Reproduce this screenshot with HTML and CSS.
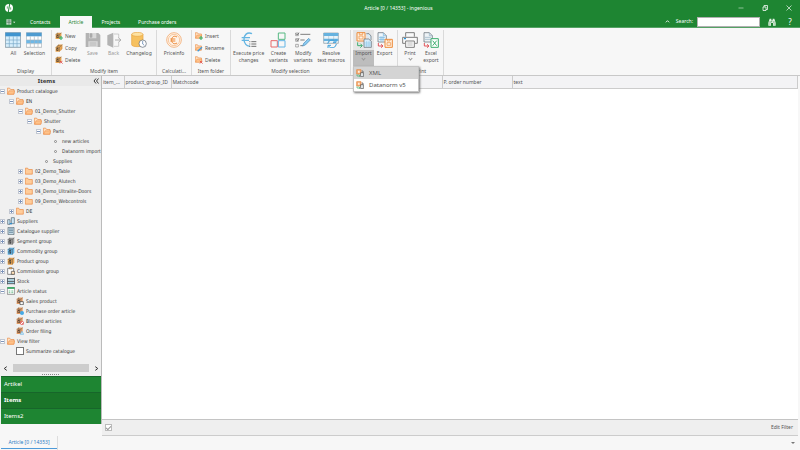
FILE: index.html
```html
<!DOCTYPE html>
<html lang="en">
<head>
<meta charset="utf-8">
<title>Article - ingenious</title>
<link rel="stylesheet" href="styles.css">
</head>
<body>
<svg class="defs" aria-hidden="true">
  <symbol id="folder" viewBox="0 0 24 21"><path d="M1 20V2h7l3 4h11v14z" fill="#ffcc99" stroke="#e9873e" stroke-width="2"/></symbol>
  <symbol id="folder-open" viewBox="0 0 24 21"><path d="M1 20V2h7l3 4h10v14z" fill="#ffe0c0" stroke="#e9873e" stroke-width="2"/><path d="M2 20l4-10h17l-3 10z" fill="#ffc28a" stroke="#e9873e" stroke-width="1.5"/></symbol>
  <symbol id="box" viewBox="0 0 24 24"><path d="M2 7l6-5h14v15l-6 6H2z" fill="currentColor"/><path d="M2 7h14v16M16 7l6-5M8 2v5" fill="none" stroke="#555" stroke-width="1.5"/><path d="M6 20v-8l5-2v8M6 12l5-2" stroke="#333" stroke-width="2" fill="none"/><circle cx="10" cy="18" r="2" fill="#333"/></symbol>
  <symbol id="plus" viewBox="0 0 10 10"><path d="M5 0v10M0 5h10" stroke="#3fb370" stroke-width="3"/></symbol>
  <symbol id="cross" viewBox="0 0 10 10"><path d="M1 1l8 8M9 1L1 9" stroke="#e04848" stroke-width="2.2"/></symbol>
  <symbol id="box-new" viewBox="0 0 24 24"><g color="#eba44f"><use href="#box" width="21" height="22"/></g><use href="#plus" x="12" y="12" width="12" height="12"/></symbol>
  <symbol id="box-copy" viewBox="0 0 24 24"><g color="#eba44f"><use href="#box" x="4" width="20" height="20"/><use href="#box" y="4" width="20" height="20"/></g></symbol>
  <symbol id="box-del" viewBox="0 0 24 24"><g color="#eba44f"><use href="#box" width="21" height="22"/></g><use href="#cross" x="13" y="13" width="11" height="11"/></symbol>
  <symbol id="table" viewBox="0 0 48 48"><path d="M1 2h46v44H1z" fill="#d7eefb" stroke="#6a7f8c" stroke-width="2"/><path d="M1 2h46v11H1z" fill="#3f94cf"/><path d="M2 24h44M2 35h44M13 13v32M25 13v32M36 13v32" stroke="#79a9c8" stroke-width="2"/></symbol>
  <symbol id="table-sel" viewBox="0 0 48 48"><path d="M1 2h46v44H1z" fill="#fff" stroke="#9aa5ac" stroke-width="2"/><path d="M1 2h46v11H1z" fill="#4e9bd0"/><path d="M1 24h46v10H1z" fill="#6cb8e8"/><path d="M2 24h44M2 35h44M13 13v32M25 13v32M36 13v32" stroke="#a7b5be" stroke-width="2"/></symbol>
  <symbol id="save" viewBox="0 0 48 48"><path d="M2 3h38l6 6v36H2z" fill="#b3b3b3"/><path d="M12 3h22v16H12zM10 28h28v17H10z" fill="#d9d9d9"/><path d="M15 5h6v11h-6zM14 33h20M14 39h20" stroke="#aaa" stroke-width="2" fill="#aaa"/></symbol>
  <symbol id="back" viewBox="0 0 48 48"><path d="M22 2L4 10v29l18 8z" fill="#b3b3b3"/><path d="M24 6h14v12M24 43h14V31" fill="none" stroke="#b9b9b9" stroke-width="2"/><path d="M27 24h16M37 17l8 7-8 7" fill="none" stroke="#b0b0b0" stroke-width="3"/></symbol>
  <symbol id="log" viewBox="0 0 48 48"><path d="M2 7v31c0 8 34 8 34 0V7" fill="#f6c160" stroke="#e8a33e" stroke-width="2"/><ellipse cx="19" cy="7" rx="17" ry="6" fill="#fde2a3" stroke="#e8a33e" stroke-width="2"/><circle cx="35" cy="35" r="11" fill="#fff" stroke="#566270" stroke-width="2"/><path d="M35 27v9l5 4" fill="none" stroke="#466fa3" stroke-width="2"/></symbol>
  <symbol id="price" viewBox="0 0 48 48"><circle cx="24" cy="24" r="22" fill="#fff4e9" stroke="#f09a55" stroke-width="2"/><circle cx="24" cy="24" r="17" fill="none" stroke="#f3b27c" stroke-width="2"/><path d="M33 15c-10-6-16 1-16 9s6 15 16 9M13 21h15M13 27h15" fill="none" stroke="#ed8a3b" stroke-width="3"/></symbol>
  <symbol id="f-ins" viewBox="0 0 24 24"><use href="#folder-open" width="22" height="20"/><use href="#plus" x="12" y="12" width="12" height="12"/></symbol>
  <symbol id="f-ren" viewBox="0 0 24 24"><use href="#folder-open" width="22" height="20"/><path d="M8 22l13-12" stroke="#3c9be0" stroke-width="4"/></symbol>
  <symbol id="f-del" viewBox="0 0 24 24"><use href="#folder-open" width="22" height="20"/><use href="#cross" x="13" y="13" width="11" height="11"/></symbol>
  <symbol id="exec" viewBox="0 0 48 48"><path d="M33 5C18-2 9 10 9 22s8 22 18 20M2 17h25M2 25h22" fill="none" stroke="#64b5e2" stroke-width="4"/><path d="M31 29h15M31 36h15M31 43h15M25 29h3M25 36h3M25 43h3" stroke="#555" stroke-width="2.5"/></symbol>
  <symbol id="create" viewBox="0 0 48 48"><g fill="none" stroke-width="3"><path d="M25 3h20v19H25z" stroke="#56b982"/><path d="M3 26h19v19H3z" stroke="#e8686b"/><path d="M25 26h20v19H25z" stroke="#62b5e5"/></g></symbol>
  <symbol id="modify" viewBox="0 0 48 48"><path d="M2 3h8v8H2zM2 20h8v8H2zM2 37h8v8H2z" fill="none" stroke="#666" stroke-width="1.5"/><path d="M16 7h30M16 24h13M16 41h8M3 5l4 4 5-7M3 22l4 4 5-7" fill="none" stroke="#666" stroke-width="2.5"/><path d="M23 42l3-8 15-15 5 5-15 15z" fill="#8acaf0" stroke="#4d8ebb" stroke-width="2"/></symbol>
  <symbol id="resolve" viewBox="0 0 48 48"><path d="M2 3h44v31H2z" fill="#e8f4fb" stroke="#89969e" stroke-width="2"/><path d="M2 3h44v9H2zM2 20h44v7H2z" fill="#66b2df"/><path d="M17 12v22M32 12v22" stroke="#89969e"/><path d="M14 35a13 13 0 0 1 23-6M39 22v9h-9M40 36a13 13 0 0 1-23 7M15 48v-8h9" fill="none" stroke="#3ba1dc" stroke-width="3"/></symbol>
  <symbol id="import" viewBox="0 0 48 48"><path d="M3 2h24v25H3z" fill="#fff0df" stroke="#ed8d3d" stroke-width="3"/><path d="M10 2v6h10V2M9 12h12v9H9z" fill="none" stroke="#ed8d3d" stroke-width="2"/><path d="M31 5h8l6 7v12M24 21h14l8 7v18H24z" fill="#d7edfb" stroke="#5c6670" stroke-width="2"/><path d="M25 33h20M25 39h20M32 27v18M39 27v18" stroke="#59a9dc"/><path d="M5 31v10h13M13 35l6 6-6 6" fill="none" stroke="#3fae6f" stroke-width="3"/></symbol>
  <symbol id="import-small" viewBox="0 0 24 24"><path d="M2 2h13v13H2z" fill="#f3b07a" stroke="#e58439" stroke-width="2"/><path d="M6 5h5v6H6z" fill="#fff0df"/><path d="M17 6h4v5M14 11h8v12h-8z" fill="#f2f7fa" stroke="#444" stroke-width="2"/><path d="M3 16v5h8M8 17l4 4-4 3" fill="none" stroke="#3fae6f" stroke-width="2"/></symbol>
  <symbol id="export" viewBox="0 0 48 48"><path d="M3 2h16l9 9v19H3z" fill="#eef7fd" stroke="#59636c" stroke-width="2"/><path d="M19 2v9h9M6 16h18M6 22h18M12 13v15M18 13v15" fill="none" stroke="#6bb1dd" stroke-width="2"/><path d="M24 22h22v24H24z" fill="#fff0df" stroke="#ed8d3d" stroke-width="3"/><path d="M31 22v5h8v-5M30 32h11v8H30z" fill="none" stroke="#ed8d3d" stroke-width="2"/><path d="M4 33v9h13M12 37l6 5-6 5" fill="none" stroke="#e2555b" stroke-width="3"/></symbol>
  <symbol id="print" viewBox="0 0 48 48"><path d="M11 14V2h26v12M10 34H2V16h44v18h-8" fill="#fafafa" stroke="#666" stroke-width="2.5"/><path d="M11 27h26v19H11z" fill="#fff" stroke="#666" stroke-width="2.5"/><path d="M16 33h16M16 39h16" stroke="#999" stroke-width="2"/><path d="M6 20h6" stroke="#2696dd" stroke-width="4"/></symbol>
  <symbol id="excel" viewBox="0 0 48 48"><path d="M3 2h16l9 9v19H3z" fill="#eef3f6" stroke="#59636c" stroke-width="2"/><path d="M19 2v9h9M6 16h18M6 22h18" fill="none" stroke="#8caabe" stroke-width="2"/><path d="M24 20h22v26H24z" fill="#fff" stroke="#3cae6e" stroke-width="3"/><path d="M29 26l12 15M41 26L29 41" stroke="#3cae6e" stroke-width="3"/><path d="M4 33v9h13M12 37l6 5-6 5" fill="none" stroke="#e2555b" stroke-width="3"/></symbol>
  <symbol id="suppliers" viewBox="0 0 24 24"><path d="M2 8h7v14H2zM13 2h9v18h-9z" fill="#c9e6f7" stroke="#51616d" stroke-width="2"/><path d="M8 20h7" stroke="#2e8dca" stroke-width="4"/></symbol>
  <symbol id="catalog" viewBox="0 0 24 24"><path d="M3 1h18v22H3z" fill="#c5dbe8" stroke="#53606a" stroke-width="2"/><path d="M7 6h4M13 6h4M7 11h4M13 11h4M7 16h4M13 16h4" stroke="#496a80" stroke-width="3"/></symbol>
  <symbol id="commission" viewBox="0 0 24 24"><path d="M2 4h18v18H2z" fill="#fff" stroke="#555" stroke-width="2"/><path d="M7 1h8v5H7z" fill="#eba44f" stroke="#555"/><path d="M13 13h10v9H13z" fill="#ffe0b8" stroke="#444" stroke-width="2"/></symbol>
  <symbol id="stock" viewBox="0 0 24 24"><path d="M1 2v20M23 2v20M1 5h22M1 13h22M1 20h22" stroke="#46525b" stroke-width="3"/><path d="M4 9h16M4 17h16" stroke="#7fc6df" stroke-width="3"/></symbol>
  <symbol id="status" viewBox="0 0 24 24"><path d="M1 2h22v20H1z" fill="#fff" stroke="#666" stroke-width="2"/><path d="M1 3h22" stroke="#2fa75e" stroke-width="5"/><path d="M5 12h5M13 12h6M5 17h5M13 17h6" stroke="#3aa564" stroke-width="2"/></symbol>
  <symbol id="s-sale" viewBox="0 0 24 24"><g color="#eba066"><use href="#box" width="22" height="22"/></g><path d="M12 14h10v9H12z" fill="#fff" stroke="#333" stroke-width="2"/></symbol>
  <symbol id="s-buy" viewBox="0 0 24 24"><g color="#eba066"><use href="#box" width="22" height="22"/></g><circle cx="18" cy="18" r="6" fill="#45a9e6"/></symbol>
  <symbol id="s-block" viewBox="0 0 24 24"><g color="#eba066"><use href="#box" width="22" height="22"/></g><circle cx="18" cy="18" r="5" fill="#fff" stroke="#e04848" stroke-width="2"/><path d="M14 14l8 8" stroke="#e04848" stroke-width="2"/></symbol>
  <symbol id="s-file" viewBox="0 0 24 24"><g color="#eba066"><use href="#box" width="22" height="22"/></g><path d="M13 22l5-9 5 9z" fill="#d8effb" stroke="#69b6e4" stroke-width="2"/></symbol>
</svg>

<header class="top">
  <div class="titlebar">
    <svg class="logo" viewBox="0 0 24 24"><circle cx="12" cy="12" r="12" fill="#fff"/><path d="M14 0L10 24" stroke="#1e8532" stroke-width="3"/><path d="M7 7v7M17 10v7" stroke="#1e8532" stroke-width="2"/></svg>
    <h1>Article [0 / 14353] - ingenious</h1>
    <div class="window">
      <button aria-label="Minimize"><svg viewBox="0 0 12 12"><path d="M1 6h10" stroke="#fff"/></svg></button>
      <button aria-label="Restore"><svg viewBox="0 0 12 12"><path d="M2 4h6v7H2zM4 4V1h7v8H8" fill="none" stroke="#fff" stroke-width="1.5"/></svg></button>
      <button aria-label="Close"><svg viewBox="0 0 12 12"><path d="M1 1l10 10M11 1L1 11" stroke="#fff" stroke-width="1.3"/></svg></button>
    </div>
  </div>
  <div class="tabbar">
    <button class="appmenu" aria-label="Menu"><svg viewBox="0 0 30 18"><path d="M1 1h15v16H1z" fill="#cfe5d3"/><path d="M1 6h15M1 11h15M9 1v16" stroke="#4b735a" stroke-width="2"/><path d="M21 8h7l-3.500 4z" fill="#fff"/></svg></button>
    <nav class="tabs"><a href="#">Contacts</a><a href="#" class="on">Article</a><a href="#">Projects</a><a href="#">Purchase orders</a></nav>
    <div class="search">
      <svg viewBox="0 0 12 12"><path d="M2 8l4-4 4 4" fill="none" stroke="#fff" stroke-width="2"/></svg>
      <label for="q">Search:</label><input id="q" type="text">
      <button aria-label="Find"><svg class="bino" viewBox="0 0 24 24"><path d="M5 2h5v5h4V2h5l4 12v9h-8v-8H9v8H1v-9z" fill="#e3f1e5"/><path d="M4 12h5M15 12h5M4 18h3M17 18h3M11 8v5" stroke="#1e8532" stroke-width="2"/></svg></button>
      <button class="help">?</button>
    </div>
  </div>
</header>

<section class="ribbon">
  <div class="group g-display"><div class="tools">
    <button class="big"><svg><use href="#table"/></svg>All</button>
    <button class="big"><svg><use href="#table-sel"/></svg>Selection</button>
  </div><h2>Display</h2></div>
  <div class="group g-item"><div class="tools">
    <div class="stack"><button><svg><use href="#box-new"/></svg>New</button><button><svg><use href="#box-copy"/></svg>Copy</button><button><svg><use href="#box-del"/></svg>Delete</button></div>
    <button class="big off"><svg><use href="#save"/></svg>Save</button>
    <button class="big off"><svg><use href="#back"/></svg>Back</button>
    <button class="big wide"><svg><use href="#log"/></svg>Changelog</button>
  </div><h2>Modify item</h2></div>
  <div class="group g-price"><div class="tools">
    <button class="big"><svg><use href="#price"/></svg>Priceinfo</button>
  </div><h2>Calculati...</h2></div>
  <div class="group g-folder"><div class="tools">
    <div class="stack"><button><svg><use href="#f-ins"/></svg>Insert</button><button><svg><use href="#f-ren"/></svg>Rename</button><button><svg><use href="#f-del"/></svg>Delete</button></div>
  </div><h2>Item folder</h2></div>
  <div class="group g-select"><div class="tools">
    <button class="big"><svg><use href="#exec"/></svg>Execute price<br>changes</button>
    <button class="big"><svg><use href="#create"/></svg>Create<br>variants</button>
    <button class="big"><svg><use href="#modify"/></svg>Modify<br>variants</button>
    <button class="big"><svg><use href="#resolve"/></svg>Resolve<br>text macros</button>
  </div><h2>Modify selection</h2></div>
  <div class="group g-data"><div class="tools">
    <div class="dropdown">
      <button class="big open"><svg><use href="#import"/></svg>Import<i class="caret"></i></button>
      <div class="menu"><button class="on"><svg><use href="#import-small"/></svg>XML</button><button><svg><use href="#import-small"/></svg>Datanorm v5</button></div>
    </div>
    <button class="big"><svg><use href="#export"/></svg>Export</button>
  </div></div>
  <div class="group g-print"><div class="tools">
    <button class="big"><svg><use href="#print"/></svg>Print<i class="caret"></i></button>
    <button class="big"><svg><use href="#excel"/></svg>Excel<br>export</button>
  </div><h2>Print</h2></div>
</section>

<main>
  <aside>
    <div class="panel-head"><h2>Items</h2><button aria-label="Collapse"><svg viewBox="0 0 12 12"><path d="M6 1L2 6l4 5M11 1L7 6l4 5" fill="none" stroke="#222" stroke-width="1.8"/></svg></button></div>
    <ul class="tree">
      <li><span class="row"><b class="ex"></b><svg><use href="#folder-open"/></svg>Product catalogue</span>
        <ul>
          <li><span class="row"><b class="ex"></b><svg><use href="#folder-open"/></svg>EN</span>
            <ul>
              <li><span class="row"><b class="ex"></b><svg><use href="#folder-open"/></svg>01_Demo_Shutter</span>
                <ul>
                  <li><span class="row"><b class="ex"></b><svg><use href="#folder-open"/></svg>Shutter</span>
                    <ul>
                      <li><span class="row"><b class="ex"></b><svg><use href="#folder-open"/></svg>Parts</span>
                        <ul>
                          <li><span class="row leaf"><b class="dot"></b>new articles</span></li>
                          <li><span class="row leaf"><b class="dot"></b>Datanorm import</span></li>
                        </ul></li>
                      <li><span class="row leaf"><b class="dot"></b>Supplies</span></li>
                    </ul></li>
                </ul></li>
              <li><span class="row"><b class="ex more"></b><svg><use href="#folder"/></svg>02_Demo_Table</span></li>
              <li><span class="row"><b class="ex more"></b><svg><use href="#folder"/></svg>03_Demo_Alutech</span></li>
              <li><span class="row"><b class="ex more"></b><svg><use href="#folder"/></svg>04_Demo_Ultralite-Doors</span></li>
              <li><span class="row"><b class="ex more"></b><svg><use href="#folder"/></svg>09_Demo_Webcontrols</span></li>
            </ul></li>
          <li><span class="row"><b class="ex more"></b><svg><use href="#folder"/></svg>DE</span></li>
        </ul></li>
      <li><span class="row"><b class="ex more"></b><svg><use href="#suppliers"/></svg>Suppliers</span></li>
      <li><span class="row"><b class="ex more"></b><svg><use href="#catalog"/></svg>Catalogue supplier</span></li>
      <li><span class="row"><b class="ex more"></b><svg class="gray"><use href="#box"/></svg>Segment group</span></li>
      <li><span class="row"><b class="ex more"></b><svg class="blue"><use href="#box"/></svg>Commodity group</span></li>
      <li><span class="row"><b class="ex more"></b><svg class="orange"><use href="#box"/></svg>Product group</span></li>
      <li><span class="row"><b class="ex more"></b><svg><use href="#commission"/></svg>Commission group</span></li>
      <li><span class="row"><b class="ex more"></b><svg><use href="#stock"/></svg>Stock</span></li>
      <li><span class="row"><b class="ex"></b><svg><use href="#status"/></svg>Article status</span>
        <ul>
          <li><span class="row"><b></b><svg><use href="#s-sale"/></svg>Sales product</span></li>
          <li><span class="row"><b></b><svg><use href="#s-buy"/></svg>Purchase order article</span></li>
          <li><span class="row"><b></b><svg><use href="#s-block"/></svg>Blocked articles</span></li>
          <li><span class="row"><b></b><svg><use href="#s-file"/></svg>Order filing</span></li>
        </ul></li>
      <li><span class="row"><b class="ex"></b><svg><use href="#folder-open"/></svg>View filter</span>
        <ul><li><label class="row"><b></b><input type="checkbox">Summarize catalogue</label></li></ul></li>
    </ul>
    <div class="hscroll"><svg viewBox="0 0 8 8"><path d="M6 1L2 4l4 3" fill="none" stroke="#333" stroke-width="1.6"/></svg><span></span><svg viewBox="0 0 8 8"><path d="M2 1l4 3-4 3" fill="none" stroke="#333" stroke-width="1.6"/></svg></div>
    <div class="grip"></div>
    <nav class="sections"><a href="#">Artikel</a><a href="#" class="on">Items</a><a href="#">Items2</a></nav>
  </aside>
  <section class="content">
    <table>
      <colgroup><col class="c-id"><col class="c-group"><col class="c-match"><col class="c-order"><col></colgroup>
      <thead><tr><th>item_...</th><th>product_group_ID</th><th>Matchcode</th><th>P. order number</th><th>text</th></tr></thead>
    </table>
    <div class="rows"></div>
    <div class="filter"><input type="checkbox" checked aria-label="Filter active"><button>Edit Filter</button></div>
  </section>
</main>
<footer><a href="#">Article [0 / 14353]</a><div class="rest"><i></i></div></footer>
</body>
</html>
```
FILE: styles.css
```css
* { box-sizing: border-box; }
body {
  margin: 0;
  height: 100vh;
  display: flex;
  flex-direction: column;
  overflow: hidden;
  background: #f7f7f7;
  color: #555;
  font: 5px/7px "Noto Sans", "Open Sans", sans-serif;
}
h1, h2, ul { margin: 0; padding: 0; font: inherit; list-style: none; }
button { border: 0; padding: 0; background: none; color: inherit; font: inherit; }
a { color: inherit; text-decoration: none; }
svg { display: block; flex: none; }
.defs { position: absolute; width: 0; height: 0; }

.top { background: #1e8532; color: #fff; }
.titlebar { display: grid; grid-template-columns: 1fr auto 1fr; align-items: center; height: 16px; padding: 0 8px 0 5px; }
.logo { width: 8px; height: 8px; }
.window { display: flex; justify-content: flex-end; gap: 18px; }
.window svg { width: 6px; height: 6px; }
.tabbar { display: flex; height: 12px; align-items: center; border-bottom: 1px solid #55a265; }
.appmenu { width: 21px; padding-left: 6px; }
.appmenu svg { width: 10px; height: 6px; }
.tabs { display: flex; flex: 1; align-self: stretch; margin-bottom: -1px; }
.tabs a { padding: 0 9px; line-height: 13px; }
.tabs .on { background: #f7f7f7; color: #1e8532; }
.search { display: flex; align-items: center; }
.search > svg { width: 5px; height: 5px; margin-right: 6px; }
.search input { width: 63px; height: 10px; margin: 0 8px 0 4px; padding: 0 2px; border: 1px solid #b0b0b0; background: #fff; font: inherit; }
.bino { width: 8px; height: 8px; }
.help { width: 20px; margin-left: 4px; font-size: 8px; }

.ribbon { display: flex; height: 48px; flex: none; border-bottom: 1px solid #c8c8c8; }
.group { display: flex; flex-direction: column; justify-content: space-between; border-right: 1px solid #dadada; margin-top: 2px; }
.group h2 { text-align: center; }
.tools { display: flex; justify-content: center; }
.g-display { width: 52px; }
.g-display .tools { padding-right: 3px; }
.g-item { width: 105px; }
.g-item .tools { padding-right: 2px; }
.g-price { width: 35px; }
.g-folder { width: 39px; }
.g-select { width: 120px; }
.g-select .tools { justify-content: space-between; padding: 0 5px 0 2px; }
.g-data { width: 47px; }
.g-print { width: 46px; }
.big { display: flex; flex-direction: column; align-items: center; flex: none; min-width: 21px; height: 37px; padding: 2px 0 0; text-align: center; }
.big svg { width: 16px; height: 16px; margin-bottom: 2px; }
.big.wide { min-width: 30px; }
.off { color: #999; }
.stack { flex: 1; padding-left: 3px; }
.stack button { display: flex; align-items: center; gap: 2px; height: 12px; }
.stack svg { width: 8px; height: 8px; }
.caret { width: 3px; height: 3px; border: solid #999; border-width: 0 1px 1px 0; transform: rotate(45deg); }
.dropdown { position: relative; }
.open { height: 36px; background: linear-gradient(#e6e6e6 0 20px, #bdbdbd 20px); }
.menu { position: absolute; z-index: 2; top: 36px; left: 0; width: 66px; background: #fff; border: 1px solid #c4c4c4; box-shadow: 1px 1px 2px #777; }
.menu button { display: flex; align-items: center; gap: 5px; width: 100%; height: 12px; padding-left: 2px; font-size: 6px; }
.menu svg { width: 8px; height: 8px; }
.menu .on { background: #d4d4d4; }

main { flex: 1; display: flex; min-height: 0; }
aside { width: 102px; flex: none; display: flex; flex-direction: column; border-right: 1px solid #bbb; background: #f0f0f0; margin-bottom: 12px; color: #333; }
.panel-head { display: flex; height: 10px; align-items: center; background: #e9e9e9; }
.panel-head h2 { flex: 1; text-align: center; font: bold 6px/10px "Noto Sans", sans-serif; }
.panel-head svg { width: 6px; height: 6px; margin-right: 2px; }
.tree { flex: 1; overflow: hidden; font-family: "DejaVu Sans Condensed", "DejaVu Sans", sans-serif; }
.tree ul { padding-left: 9px; }
.row { display: flex; align-items: center; height: 10px; white-space: nowrap; }
.row > b { width: 5px; height: 5px; flex: none; margin-right: 2px; }
.row svg { width: 8px; height: 8px; margin-right: 2px; }
.ex { border: 1px solid #c3c8d2; background: linear-gradient(#7d94ba, #7d94ba) center / 3px 1px no-repeat #fff; }
.ex.more { background: linear-gradient(#7d94ba, #7d94ba) center / 3px 1px no-repeat, linear-gradient(#7d94ba, #7d94ba) center / 1px 3px no-repeat, #fff; }
.leaf { padding-left: 9px; }
.row > .dot { width: 3px; height: 3px; border: 1px solid #888; border-radius: 50%; margin: 0 5px 0 0; }
.row input { appearance: none; width: 8px; height: 8px; margin: 0 2px 0 0; border: 1px solid #777; background: #fff; }
.gray { color: #a0a0a0; }
.blue { color: #61b5e8; }
.orange { color: #eba44f; }
.hscroll { display: flex; height: 10px; align-items: center; gap: 5px; padding: 0 2px 0 3px; }
.hscroll svg { width: 5px; height: 5px; }
.hscroll span { flex: 1; height: 8px; background: #cdcdcd; }
.grip { width: 18px; height: 3px; margin: 0 auto; background: repeating-linear-gradient(90deg, #888 0 1px, transparent 1px 2px) center / 100% 1px no-repeat; }
.sections { margin-left: 1px; background: #1e8532; color: #fff; font-size: 6px; }
.sections a { display: block; height: 16px; padding-left: 3px; border-top: 1px solid #17662a; line-height: 15px; }
.sections .on { background: #1a7529; font-weight: bold; }

.content { flex: 1; display: flex; flex-direction: column; min-width: 0; margin-right: 2px; border-bottom: 1px solid #ccc; }
table { width: 100%; table-layout: fixed; border-collapse: collapse; background: #f3f3f5; }
th { height: 12px; padding: 1px 1px 0; border: solid #ccc; border-width: 0 1px 1px 0; text-align: left; font-weight: normal; white-space: nowrap; }
.c-id { width: 22px; }
.c-group { width: 47px; }
.c-match { width: 271px; }
.c-order { width: 70px; }
.rows { flex: 1; background: #fff; }
.filter { display: flex; justify-content: space-between; align-items: center; height: 16px; padding: 0 5px 0 3px; background: #efefef; border-top: 1px solid #c4c4c4; }
.filter input { appearance: none; width: 7px; height: 7px; margin: 0; border: 1px solid #bbb; background: #fff; display: grid; place-items: center; }
.filter input::after { content: ""; width: 4px; height: 2px; border: solid #999; border-width: 0 0 1px 1px; transform: rotate(-45deg); }

footer { display: flex; height: 14px; flex: none; padding-left: 1px; }
footer a { width: 56px; height: 13px; border-bottom: 1px solid #4f9bd9; color: #2a7bc4; line-height: 12px; text-align: center; }
.rest { flex: 1; display: flex; align-items: center; justify-content: flex-end; padding-right: 5px; border-left: 1px solid #ddd; }
.rest i { border: solid transparent; border-top-color: #777; border-width: 2px 2px 0; }
```
